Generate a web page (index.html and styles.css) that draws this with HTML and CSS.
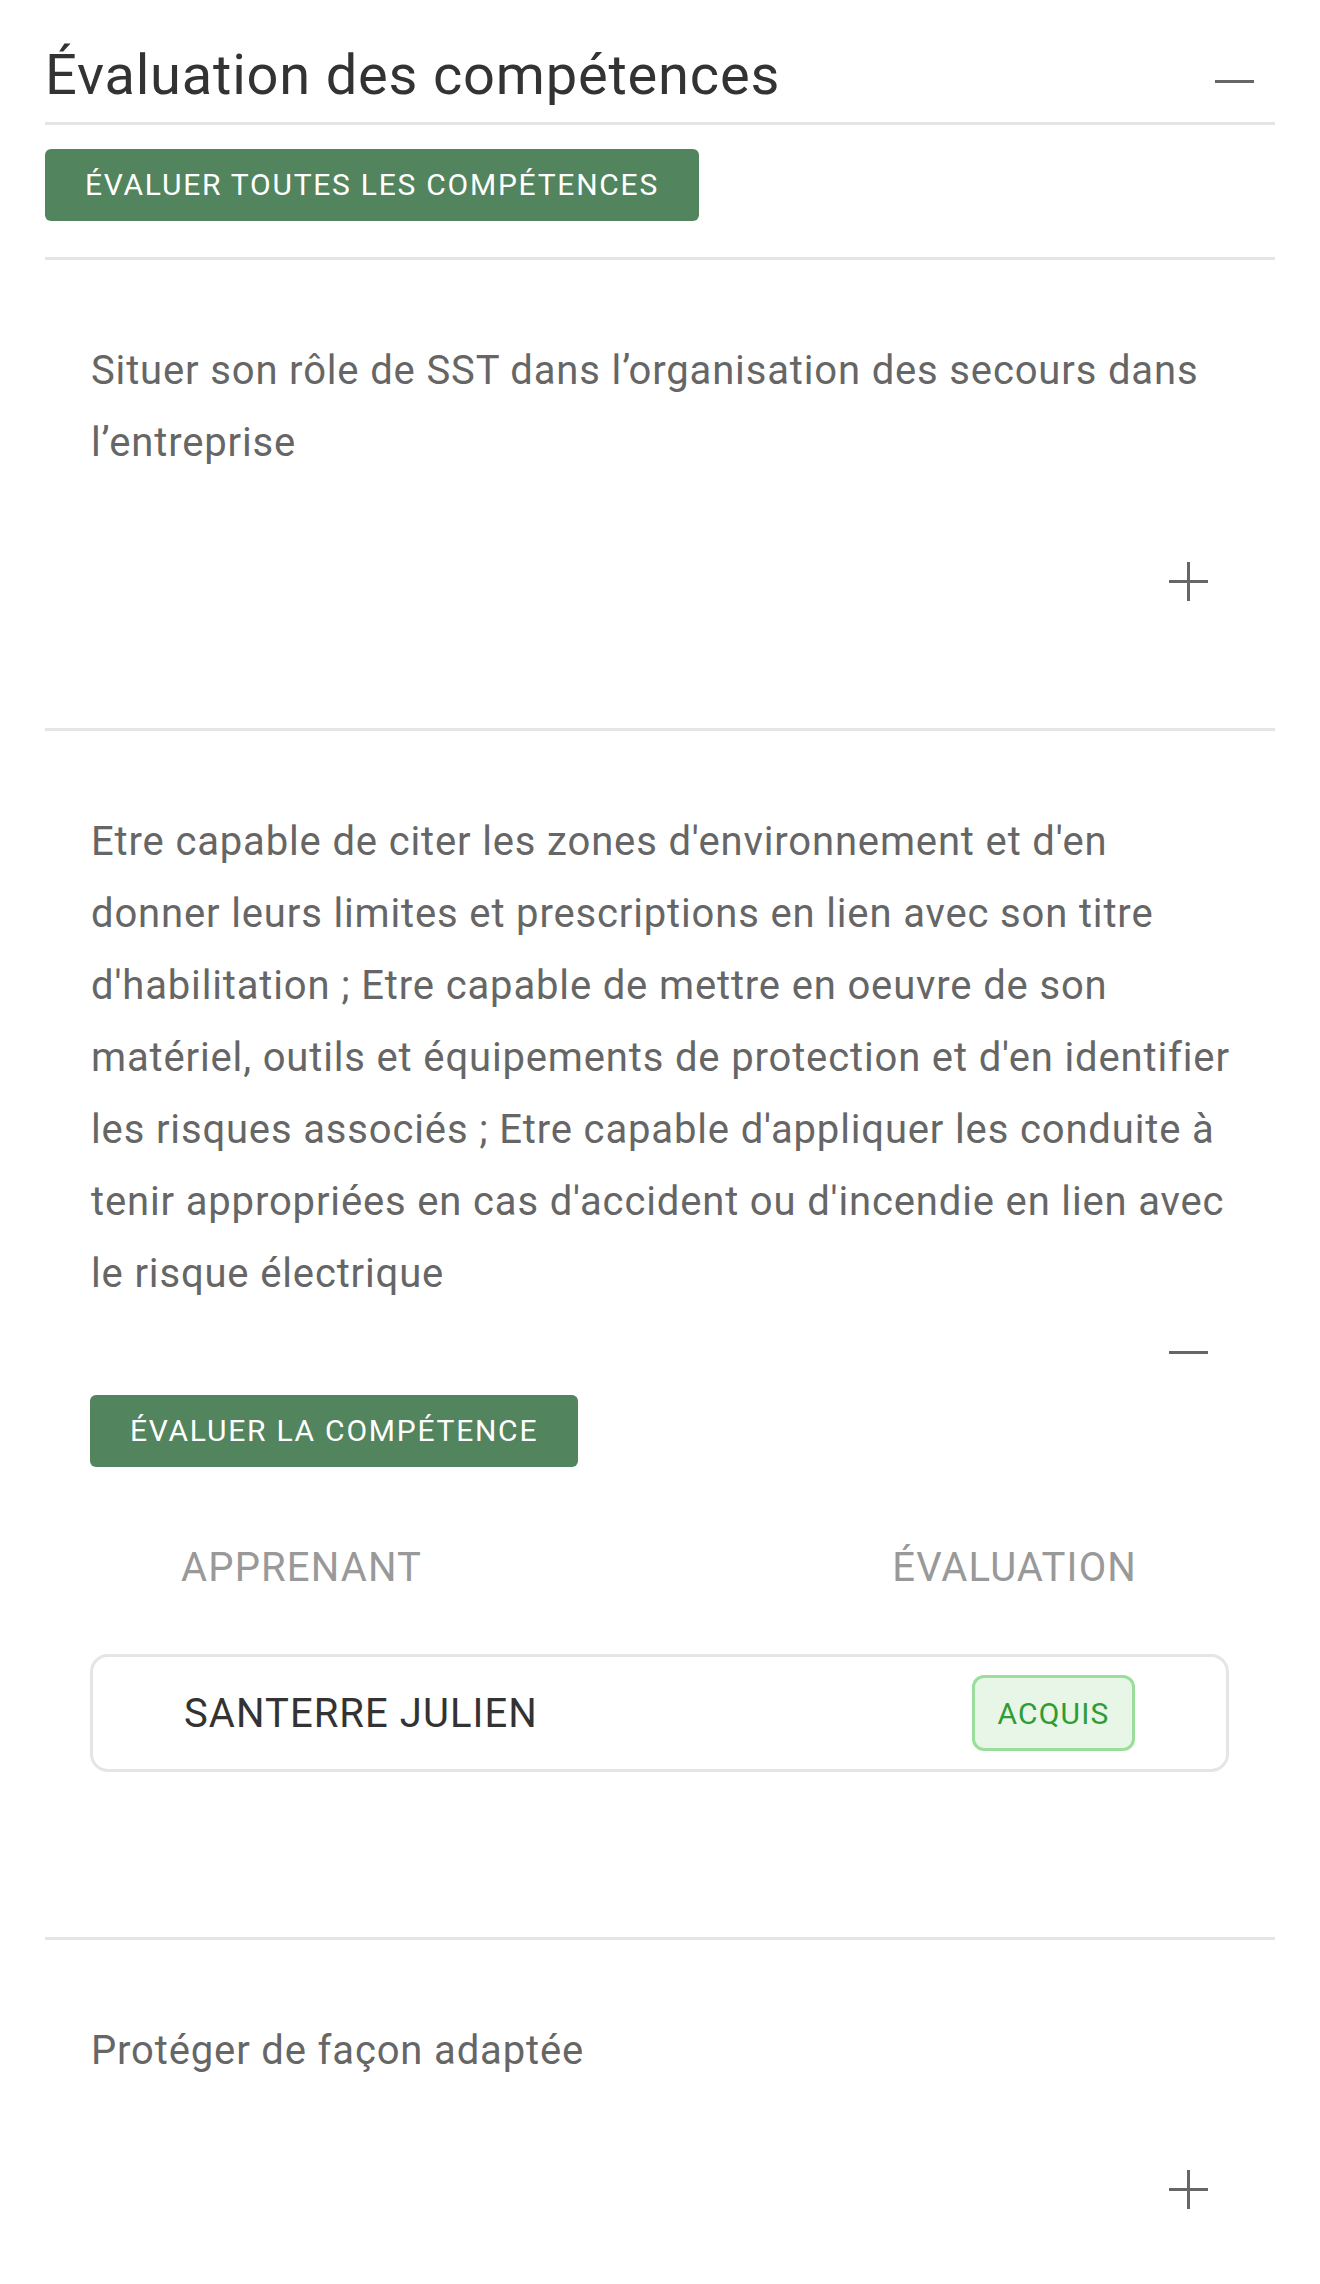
FILE: index.html
```html
<!DOCTYPE html>
<html lang="fr">
<head>
<meta charset="utf-8">
<title>Évaluation des compétences</title>
<link rel="stylesheet" href="styles.css">
</head>
<body>
<main class="page">
  <header class="head">
    <h1 class="title">Évaluation des compétences</h1>
    <span class="icon icon-head"><svg width="39" height="39" viewBox="0 0 39 39"><rect x="0" y="18" width="39" height="3" fill="#666"/></svg></span>
  </header>
  <div class="toolbar">
    <button class="btn btn-all">ÉVALUER TOUTES LES COMPÉTENCES</button>
  </div>

  <section class="comp">
    <p class="comp-text">Situer son rôle de SST dans l’organisation des secours dans l’entreprise</p>
    <div class="toggle toggle-closed">
      <span class="icon"><svg width="39" height="39" viewBox="0 0 39 39"><rect x="0" y="18" width="39" height="3" fill="#666"/><rect x="18" y="0" width="3" height="39" fill="#666"/></svg></span>
    </div>
  </section>

  <section class="comp comp-open">
    <p class="comp-text">Etre capable de citer les zones d'environnement et d'en donner leurs limites et prescriptions en lien avec son titre d'habilitation ; Etre capable de mettre en oeuvre de son matériel, outils et équipements de protection et d'en identifier les risques associés ; Etre capable d'appliquer les conduite à tenir appropriées en cas d'accident ou d'incendie en lien avec le risque électrique</p>
    <div class="toggle toggle-open">
      <span class="icon"><svg width="39" height="39" viewBox="0 0 39 39"><rect x="0" y="18" width="39" height="3" fill="#666"/></svg></span>
    </div>
    <button class="btn btn-one">ÉVALUER LA COMPÉTENCE</button>
    <div class="table">
      <div class="thead">
        <span>APPRENANT</span>
        <span>ÉVALUATION</span>
      </div>
      <div class="trow">
        <span class="name">SANTERRE JULIEN</span>
        <span class="badge">ACQUIS</span>
      </div>
    </div>
  </section>

  <section class="comp">
    <p class="comp-text">Protéger de façon adaptée</p>
    <div class="toggle toggle-closed">
      <span class="icon"><svg width="39" height="39" viewBox="0 0 39 39"><rect x="0" y="18" width="39" height="3" fill="#666"/><rect x="18" y="0" width="3" height="39" fill="#666"/></svg></span>
    </div>
  </section>
</main>
</body>
</html>
```
FILE: styles.css
```css
* { box-sizing: border-box; }
html, body { margin: 0; padding: 0; background: #fff; }
body { font-family: Roboto, "Noto Sans", Arial, sans-serif; color: #333; }

.page { padding: 0 45px; }

.head {
  display: flex;
  justify-content: space-between;
  align-items: center;
  padding: 42px 0 13px;
  border-bottom: 3px solid #e5e5e5;
}
.title {
  margin: 0;
  font-size: 56px;
  font-weight: 400;
  line-height: 67px;
  letter-spacing: 0.8px;
  color: #333;
}
.icon { display: block; width: 39px; height: 39px; }
.icon svg { display: block; }
.icon-head { margin: 12px 21px 0 0; }

.toolbar {
  padding: 24px 0 36px;
  border-bottom: 3px solid #e5e5e5;
}
.btn {
  display: block;
  height: 72px;
  padding: 0 40px;
  border: none;
  border-radius: 6px;
  background: #52845e;
  color: #fff;
  font-family: Roboto, "Noto Sans", Arial, sans-serif;
  font-size: 30px;
  font-weight: 400;
  line-height: 72px;
  letter-spacing: 1.75px;
  cursor: pointer;
}

.comp {
  padding: 75px 46px 0;
  border-bottom: 3px solid #e5e5e5;
}
.comp-text {
  margin: 0 -10px 0 0;
  font-size: 40px;
  line-height: 72px;
  letter-spacing: 0.85px;
  color: #666;
}
.toggle { display: flex; justify-content: flex-end; padding-right: 21px; }
.toggle-closed { margin: 83px 0 127px; }
.toggle-open { margin: 23px 0 23px; }

.btn-one { margin: 0 0 0 -1px; }

.table { margin: 65px 0 165px -1px; }
.thead {
  display: flex;
  justify-content: space-between;
  padding: 0 92px 0 91px;
  font-size: 40px;
  line-height: 72px;
  letter-spacing: 1.15px;
  color: #999;
}
.trow {
  margin-top: 50px;
  height: 118px;
  display: flex;
  justify-content: space-between;
  align-items: center;
  padding: 0 91px;
  border: 3px solid #e5e5e5;
  border-radius: 18px;
}
.name { font-size: 40px; letter-spacing: 1.05px; color: #333; }
.badge {
  display: flex;
  align-items: center;
  justify-content: center;
  width: 163px;
  height: 76px;
  border: 3px solid #9bdd9b;
  border-radius: 12px;
  background: #e7f6e7;
  color: #2f9c34;
  font-size: 30px;
  letter-spacing: 1.2px;
}
```
